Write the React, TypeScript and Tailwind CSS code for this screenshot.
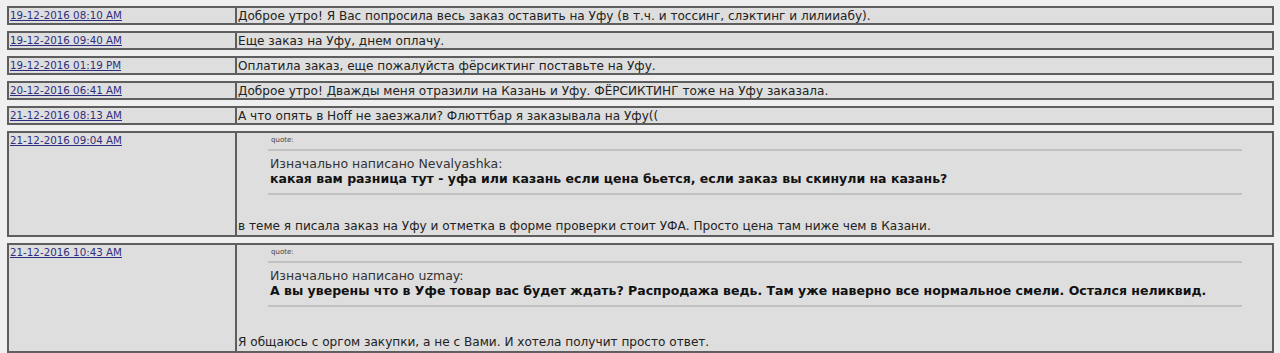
import React from "react";

const font = { fontFamily: '"DejaVu Sans", Verdana, sans-serif' };

function DateCell({ d }: { d: string }) {
  return (
    <div className="w-[228px] shrink-0 border-r-2 border-[#5e5e5e] pl-[1px] text-[10.3px] leading-[15px]">
      <a href="#" className="text-[#2e2e7e] underline decoration-[#2e2e7e]">
        {d}
      </a>
    </div>
  );
}

function SimpleRow({ d, text }: { d: string; text: string }) {
  return (
    <div className="flex border-2 border-[#5e5e5e] bg-[#dedede] h-[19px]">
      <DateCell d={d} />
      <div className="flex-1 pl-[1px] pt-[1px] text-[12.1px] leading-[15px] text-[#222] whitespace-nowrap">
        {text}
      </div>
    </div>
  );
}

function QuoteRow({
  d,
  author,
  quote,
  text,
  h,
}: {
  d: string;
  author: string;
  quote: string;
  text: string;
  h: string;
}) {
  return (
    <div className={`flex border-2 border-[#5e5e5e] bg-[#dedede] ${h}`}>
      <DateCell d={d} />
      <div className="flex-1 flex flex-col pl-[1px] text-[12.1px] leading-[15px] text-[#222]">
        <div className="ml-[30px] mr-[30px]">
          <div className="text-[7px] leading-[10px] mt-[2px] pl-[3px] text-[#444]">quote:</div>
          <div className="h-[2px] bg-[#c2c2c2] mt-[4px]" />
          <div className="mt-[5px] pl-[2px] text-[12.5px] leading-[15px] text-[#333]">
            Изначально написано {author}:
          </div>
          <div className="pl-[2px] font-bold text-[12.5px] leading-[15px] text-[#111] whitespace-nowrap">
            {quote}
          </div>
          <div className="h-[2px] bg-[#c2c2c2] mt-[7px]" />
        </div>
        <div className="mt-auto pb-[1px] whitespace-nowrap">{text}</div>
      </div>
    </div>
  );
}

export default function App() {
  return (
    <div
      className="w-[1280px] h-[353px] overflow-hidden bg-[#efefef] pl-[7px] pr-[6px] pt-[6px] flex flex-col gap-[6px]"
      style={font}
    >
      <SimpleRow
        d="19-12-2016 08:10 AM"
        text="Доброе утро! Я Вас попросила весь заказ оставить на Уфу (в т.ч. и тоссинг, слэктинг и лилииабу)."
      />
      <SimpleRow d="19-12-2016 09:40 AM" text="Еще заказ на Уфу, днем оплачу." />
      <SimpleRow
        d="19-12-2016 01:19 PM"
        text="Оплатила заказ, еще пожалуйста фёрсиктинг поставьте на Уфу."
      />
      <SimpleRow
        d="20-12-2016 06:41 AM"
        text="Доброе утро! Дважды меня отразили на Казань и Уфу. ФЁРСИКТИНГ тоже на Уфу заказала."
      />
      <SimpleRow
        d="21-12-2016 08:13 AM"
        text="А что опять в Hoff не заезжали? Флюттбар я заказывала на Уфу(("
      />
      <QuoteRow
        h="h-[107px]"
        d="21-12-2016 09:04 AM"
        author="Nevalyashka"
        quote="какая вам разница тут - уфа или казань если цена бьется, если заказ вы скинули на казань?"
        text="в теме я писала заказ на Уфу и отметка в форме проверки стоит УФА. Просто цена там ниже чем в Казани."
      />
      <QuoteRow
        h="h-[110px] shrink-0"
        d="21-12-2016 10:43 AM"
        author="uzmay"
        quote="А вы уверены что в Уфе товар вас будет ждать? Распродажа ведь. Там уже наверно все нормальное смели. Остался неликвид."
        text="Я общаюсь с оргом закупки, а не с Вами. И хотела получит просто ответ."
      />
    </div>
  );
}
